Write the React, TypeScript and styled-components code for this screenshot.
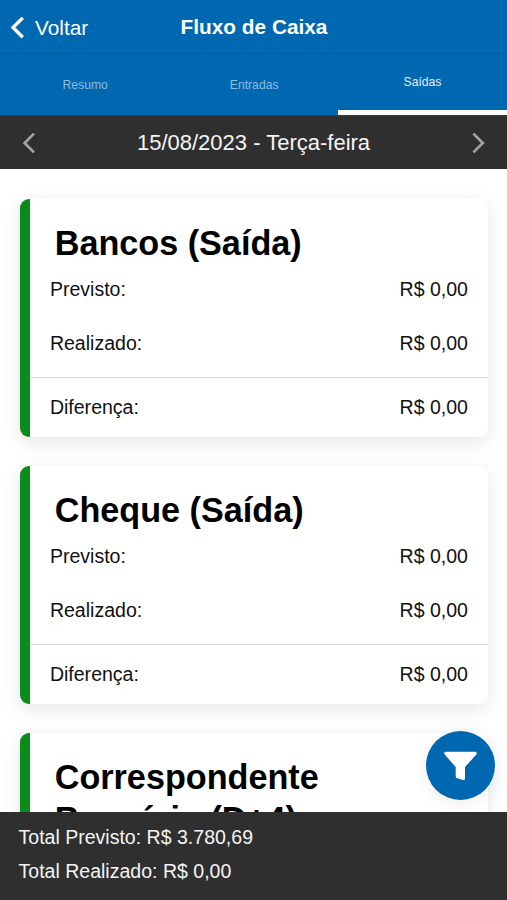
import React from "react";
import styled, { createGlobalStyle } from "styled-components";

const BLUE = "#0067b1";
const DARK = "#2f2f2f";

const GlobalStyle = createGlobalStyle`
  *, *::before, *::after { box-sizing: border-box; }
  html, body { margin: 0; padding: 0; overflow: hidden; }
  body { font-family: "Liberation Sans", Arial, sans-serif; background: #fff; }
  button { font: inherit; color: inherit; background: none; border: 0; padding: 0; margin: 0; }
`;

const Screen = styled.div`
  height: 900px;
  display: flex;
  flex-direction: column;
  overflow: hidden;
  background: #fff;
`;

const Header = styled.header`
  flex: none;
  height: 54px;
  display: grid;
  grid-template-columns: 1fr auto 1fr;
  background: ${BLUE};
  color: #fff;
  border-bottom: 1px solid #00599e;
`;

const BackButton = styled.button`
  display: flex;
  align-items: center;
  gap: 11.5px;
  padding: 2px 0 0 9.5px;
  font-size: 20.8px;
  line-height: 24px;
  svg { display: block; }
`;

const Title = styled.h1`
  margin: 0;
  padding-left: 1px;
  font-size: 20.8px;
  line-height: 54px;
  font-weight: 700;
`;

const Tabs = styled.nav`
  flex: none;
  height: 61px;
  display: grid;
  grid-template-columns: repeat(3, 1fr);
  background: ${BLUE};
`;

const Tab = styled.button<{ $active?: boolean }>`
  padding-left: ${(p) => (p.$active ? "0" : "1.3px")};
  font-size: 12.2px;
  line-height: 14px;
  color: ${(p) => (p.$active ? "#e3f0fa" : "#8dbde0")};
  border-bottom: ${(p) => (p.$active ? "5px solid #fff" : "0")};
`;

const DateBar = styled.div`
  flex: none;
  height: 54px;
  display: flex;
  align-items: center;
  justify-content: space-between;
  padding: 0 22px;
  background: ${DARK};
  border-top: 1px solid #343a40;
  color: #f4f4f4;
  font-size: 22px;
  line-height: 26px;
`;

const DateArrow = styled.button`
  display: flex;
  color: #a2a2a2;
`;

const Content = styled.main`
  flex: 1;
  min-height: 0;
  overflow: hidden;
  display: flex;
  flex-direction: column;
  gap: 29px;
  padding: 30px 19px 0 20.4px;
`;

const Card = styled.section`
  flex: none;
  border-left: 10px solid #0a8c1a;
  border-radius: 9px;
  background: #fff;
  box-shadow: 0 5px 20px rgba(0, 0, 0, 0.1);
`;

const CardTitle = styled.h2`
  margin: 0;
  padding: 23px 60px 0 24.3px;
  font-size: 34.2px;
  line-height: 42px;
  font-weight: 700;
  color: #000;
`;

const Row = styled.div`
  display: flex;
  align-items: center;
  justify-content: space-between;
  height: 54px;
  padding: 0 20px 0 19.5px;
  font-size: 19.55px;
  line-height: 24px;
  color: #111;
`;

const Figures = styled.div`
  padding: 0 0 7.5px;
  margin-top: -2.3px;
`;

const Difference = styled.div`
  padding: 2px 0 3px;
  border-top: 1px solid #d9d9d9;
`;

const Footer = styled.footer`
  position: relative;
  flex: none;
  height: 88px;
  padding: 8px 18px 0 18.5px;
  background: ${DARK};
  color: #f4f4f4;
  font-size: 19.55px;
  line-height: 34px;
`;

const FilterButton = styled.button`
  position: absolute;
  right: 12px;
  bottom: 100px;
  width: 69px;
  height: 69px;
  border-radius: 50%;
  display: flex;
  align-items: center;
  justify-content: center;
  background: ${BLUE};
  color: #fff;
  box-shadow: 0 4px 16px rgba(0, 0, 0, 0.07);
`;

const accounts = ["Bancos (Saída)", "Cheque (Saída)", "Correspondente Bancário (D+4)"];

function AccountCard({ name }: { name: string }) {
  return (
    <Card>
      <CardTitle>{name}</CardTitle>
      <Figures>
        <Row><span>Previsto:</span><span>R$ 0,00</span></Row>
        <Row><span>Realizado:</span><span>R$ 0,00</span></Row>
      </Figures>
      <Difference>
        <Row><span>Diferença:</span><span>R$ 0,00</span></Row>
      </Difference>
    </Card>
  );
}

function DateChevron({ forward }: { forward?: boolean }) {
  return (
    <svg width="14" height="22" viewBox="0 0 14 22" fill="none" stroke="currentColor" strokeWidth="2.7">
      <path d={forward ? "M2.4 1.6L11.8 11L2.4 20.4" : "M12 1.6L2.6 11L12 20.4"} />
    </svg>
  );
}

export default function App() {
  return (
    <Screen>
      <GlobalStyle />
      <Header>
        <BackButton>
          <svg width="14" height="23" viewBox="0 0 14 23" fill="none" stroke="currentColor" strokeWidth="3.4">
            <path d="M12.8 .8L3 10.5L12.8 20.2" />
          </svg>
          Voltar
        </BackButton>
        <Title>Fluxo de Caixa</Title>
      </Header>
      <Tabs>
        <Tab>Resumo</Tab>
        <Tab>Entradas</Tab>
        <Tab $active>Saídas</Tab>
      </Tabs>
      <DateBar>
        <DateArrow aria-label="Dia anterior"><DateChevron /></DateArrow>
        <span>15/08/2023 - Terça-feira</span>
        <DateArrow aria-label="Próximo dia"><DateChevron forward /></DateArrow>
      </DateBar>
      <Content>
        {accounts.map((name) => <AccountCard key={name} name={name} />)}
      </Content>
      <Footer>
        <div>Total Previsto: R$ 3.780,69</div>
        <div>Total Realizado: R$ 0,00</div>
        <FilterButton aria-label="Filtrar">
          <svg width="34" height="30" viewBox="0 0 34 30" fill="currentColor">
            <path d="M1.9 .8H31.1C32.6 .8 33.3 2.5 32.3 3.6L21 16V27.4C21 28.8 20 29.3 18.7 28.9L13.2 27.3C12.2 27 11.7 26.2 11.7 25.1V16L.7 3.6C-.3 2.5.4.8 1.9.8Z" />
          </svg>
        </FilterButton>
      </Footer>
    </Screen>
  );
}
